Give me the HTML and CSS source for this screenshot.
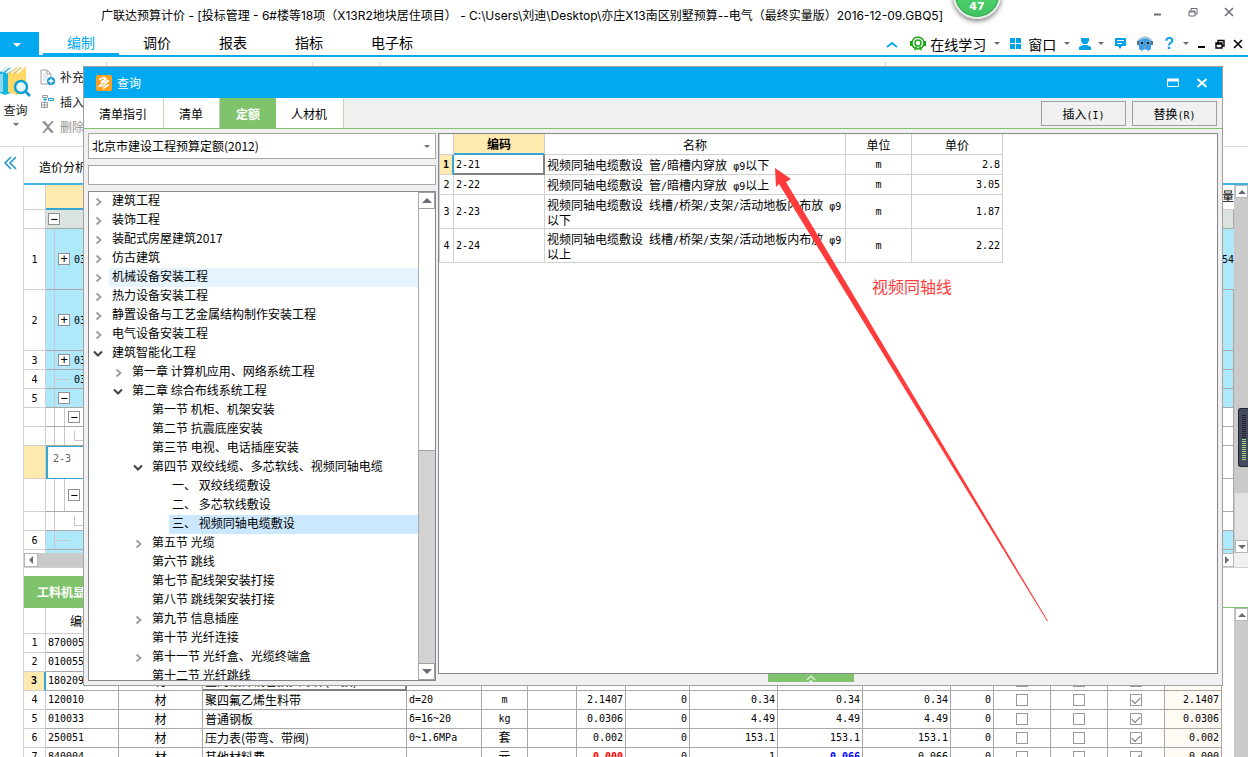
FILE: index.html
```html
<!DOCTYPE html>
<html lang="zh-CN">
<head>
<meta charset="utf-8">
<title>广联达预算计价</title>
<link rel="stylesheet" href="styles.css">
</head>
<body>
<svg class="defs" aria-hidden="true">
  <symbol id="right" viewBox="0 0 8 10"><path d="M1.5 1.5 5.5 5 1.5 8.500" fill="none" stroke="#a0a0a0" stroke-width="2"/></symbol>
  <symbol id="down" viewBox="0 0 10 8"><path d="M1 1.500 5 5.500 9 1.500" fill="none" stroke="#404040" stroke-width="2"/></symbol>
</svg>
<div class="app">
  <header class="titlebar">
    <h1 class="title">广联达预算计价 - [投标管理 - 6#楼等18项（X13R2地块居住项目） - C:\Users\刘迪\Desktop\亦庄X13南区别墅预算--电气（最终实量版）2016-12-09.GBQ5]</h1>
    <div class="badge">47</div>
    <div class="window-controls">
      <button aria-label="最小化"><svg width="10" height="10"><path d="M2 7.500h7" stroke="#6b6b78" stroke-width="2"/></svg></button>
      <button aria-label="还原"><svg width="10" height="10"><path d="M1 4h6v5h-6zM3 4V1.500h6V7H7M1 5h6" fill="none" stroke="#6b6b78"/></svg></button>
      <button aria-label="关闭"><svg width="10" height="10"><path d="M1 1l8 8M9 1L1 9" stroke="#6b6b78" stroke-width="1.500"/></svg></button>
    </div>
  </header>

  <nav class="menubar">
    <button class="app-menu" aria-label="菜单"><span class="caret light"></span></button>
    <div class="menu-tabs">
      <button class="menu-tab active">编制</button>
      <button class="menu-tab">调价</button>
      <button class="menu-tab">报表</button>
      <button class="menu-tab">指标</button>
      <button class="menu-tab">电子标</button>
    </div>
    <div class="menu-tools">
      <button class="w-collapse" aria-label="收起"><svg width="12" height="8"><path d="M1 7l5-4 5 4" fill="none" stroke="#02a9f1" stroke-width="2"/></svg></button>
      <button class="w-learn"><svg width="16" height="16"><circle cx="8" cy="7" r="6" fill="none" stroke="#2a9d1c" stroke-width="1.500"/><path d="M1 5v5M15 5v5" stroke="#11a811" stroke-width="2"/><circle cx="8" cy="7" r="3" fill="none" stroke="#18ae18" stroke-width="1.500"/><path d="M5 10l-1 5 4-3 4 3-1-5-3 2z" fill="#24ad1b"/></svg>在线学习</button>
      <span class="caret w-learn-caret"></span>
      <button class="w-window"><svg width="13" height="13"><path d="M1 1h5v5H1zM7 1h5v5H7zM1 7h5v5H1zM7 7h5v5H7z" fill="#02a1e8"/></svg>窗口</button>
      <span class="caret w-window-caret"></span>
      <button class="w-user" aria-label="用户"><svg width="14" height="13"><path d="M3 1h8v3l-2 3H5L3 4zM5 8h4l4 2v3H1v-3z" fill="#02a1e8"/></svg></button>
      <span class="caret w-user-caret"></span>
      <button class="w-chat" aria-label="消息"><svg width="13" height="13"><path d="M1 1h11v8H8l-2 3-2-3H1z" fill="#02a1e8"/><path d="M3 3.500h7M3 6.500h5" stroke="#fff"/></svg></button>
      <button class="w-bot" aria-label="助手"><svg width="16" height="16"><path d="M2 3Q8-2 14 3L15 6 14 8V13L11 15 9 13 8 14 7 13 5 15 2 13V8L0 6z" fill="#3b9fe8"/><path d="M2 4Q8-1 14 4" fill="none" stroke="#a9c5d8" stroke-width="2"/><path d="M1 5v4M15 5v4" stroke="#63717c" stroke-width="2"/><circle cx="5" cy="7" r="2" fill="#6fb8ee"/><circle cx="11" cy="7" r="2" fill="#6fb8ee"/><circle cx="5" cy="7" r="1.300" fill="#222"/><circle cx="11" cy="7" r="1.300" fill="#222"/><path d="M7 10h2l-1 1.500z" fill="#f4a52a"/></svg></button>
      <button class="w-help" aria-label="帮助">?</button>
      <span class="caret w-help-caret"></span>
      <button class="w-mdi" aria-label="最小化"><svg width="10" height="10"><path d="M1 8h7" stroke="#000" stroke-width="2"/></svg></button>
      <button class="w-mdi" aria-label="还原"><svg width="10" height="10"><path d="M1 4h6v5h-6zM3 4V1.500h6V7H7M1 5h6" fill="none" stroke="#000" stroke-width="1.400"/></svg></button>
      <button class="w-close" aria-label="关闭"><svg width="10" height="10"><path d="M1 1l8 8M9 1L1 9" stroke="#000" stroke-width="1.600"/></svg></button>
    </div>
  </nav>

  <div class="toolbar">
    <button class="tool-query">
      <svg width="31" height="32"><path d="M0 6l7-5 4 1v25l-6 2-5-2z" fill="#18b4e0"/><path d="M0 8h3v18H0z" fill="#8ed9ee"/><path d="M8 7l8-6h10v24l-9 4-9-3z" fill="#ffd866"/><path d="M2 6L9 1M6 7l8-6M11 7l8-6M17 7l7-6" stroke="#fff" stroke-width="2"/><path d="M2 7L9 2M9 8l8-6M14 8l7-6" stroke="#9a9a9a" stroke-width=".6"/><circle cx="21" cy="21" r="6" fill="#e9f8fe" stroke="#159fd0" stroke-width="2.500"/><path d="M25 25l5 5" stroke="#159fd0" stroke-width="3"/></svg>
      <span>查询</span><span class="caret"></span>
    </button>
    <div class="tool-list">
      <button><svg width="16" height="16"><path d="M1 1h6l4 4v10H1zM7 1v4h4" fill="#fff" stroke="#a0a0a0"/><path d="M3 5h3M3 7h5M3 9h4M3 11h3" stroke="#d0d0d0"/><circle cx="11" cy="12" r="4" fill="#1598cf"/><path d="M8.500 12h5M11 9.500v5" stroke="#fff" stroke-width="1.400"/></svg>补充</button>
      <button><svg width="16" height="16"><path d="M2.500 1.500h5v2h-5zM1.500 8.500h6v5h-6zM4.500 8.500v5M1.500 11h6" fill="none" stroke="#9a9a9a"/><path d="M8.500 4.500h5v2h-5z" fill="none" stroke="#18a0d6"/><path d="M3 5.500h4M5 3.500v4" stroke="#18a0d6"/></svg>插入</button>
      <button class="disabled"><svg width="16" height="16"><path d="M2 3l3-1 3 4 4-4h2l-5 6 5 5-3 1-3-4-4 4H2l5-6z" fill="#909090"/></svg>删除</button>
    </div>
    <i class="sep sep-a"></i><i class="sep sep-b"></i><i class="sep sep-c"></i><i class="sep sep-d"></i>
  </div>

  <div class="workspace">
    <aside class="rail"><button aria-label="展开"><svg width="13" height="14"><path d="M7 1L1 7l6 6M12 1L6 7l6 6" fill="none" stroke="#1593cc" stroke-width="1.500"/></svg></button></aside>
    <main class="main">
      <div class="view-tabs"><button>造价分析</button></div>
      <section class="upper">
        <table class="grid bill">
          <colgroup><col class="c22"><col class="c73"><col><col class="c57"></colgroup>
          <thead><tr class="h25"><th></th><th class="hot"></th><th></th><th class="right">量</th></tr></thead>
          <tbody>
            <tr class="h19 gray"><td></td><td><div class="node n0"><button>−</button></div></td><td></td><td></td></tr>
            <tr class="h61 blue"><td>1</td><td class="l1"><div class="node n1"><button>+</button><span>03</span></div></td><td></td><td class="right">54</td></tr>
            <tr class="h61 blue"><td>2</td><td class="l1"><div class="node n1"><button>+</button><span>03</span></div></td><td></td><td></td></tr>
            <tr class="h19 blue"><td>3</td><td class="l1"><div class="node n1"><button>+</button><span>03</span></div></td><td></td><td></td></tr>
            <tr class="h19 blue"><td>4</td><td class="l1"><div class="node leaf"><i></i><span>03</span></div></td><td></td><td></td></tr>
            <tr class="h19 blue"><td>5</td><td class="l1"><div class="node n1"><button>−</button></div></td><td></td><td></td></tr>
            <tr class="h19"><td></td><td class="l2"><div class="node n2"><button>−</button></div></td><td></td><td></td></tr>
            <tr class="h19"><td></td><td class="l2"><div class="elbow"></div></td><td></td><td></td></tr>
            <tr class="h33 current"><td></td><td class="code">2-3</td><td></td><td></td></tr>
            <tr class="h33"><td></td><td class="l2"><div class="node n2"><button>−</button></div></td><td></td><td></td></tr>
            <tr class="h19"><td></td><td class="l1"><div class="elbow"></div></td><td></td><td></td></tr>
            <tr class="h19 blue"><td>6</td><td class="l1"><div class="node leaf"><i></i></div></td><td></td><td></td></tr>
            <tr class="h3 blue"><td></td><td></td><td></td><td></td></tr>
          </tbody>
        </table>
        <div class="vbar"><button class="up" aria-label="向上"></button><div class="thumb"></div><button class="dn" aria-label="向下"></button></div>
      </section>
      <div class="hbar"><button class="lf" aria-label="向左"></button><div class="track"></div><button class="rt" aria-label="向右"></button><span></span></div>
      <div class="detail-tabs"><button>工料机显示</button></div>
      <section class="lower">
        <table class="grid items">
          <colgroup><col class="c22"><col class="c73"><col class="c84"><col><col class="c75"><col class="c46"><col class="c49"><col class="c49"><col class="c64"><col class="c88"><col class="c85"><col class="c88"><col class="c43"><col class="c57"><col class="c57"><col class="c57"><col class="c57"></colgroup>
          <thead><tr class="h26"><th></th><th>编码</th><th>类别</th><th>名称</th><th>规格及型号</th><th>单位</th><th></th><th></th><th></th><th></th><th></th><th></th><th></th><th></th><th></th><th></th><th></th></tr></thead>
          <tbody>
            <tr><td>1</td><td>870005</td><td></td><td></td><td></td><td></td><td></td><td></td><td></td><td></td><td></td><td></td><td></td><td></td><td></td><td></td><td></td></tr>
            <tr><td>2</td><td>010055</td><td></td><td></td><td></td><td></td><td></td><td></td><td></td><td></td><td></td><td></td><td></td><td></td><td></td><td></td><td></td></tr>
            <tr class="picked"><td>3</td><td>180209</td><td>材</td><td class="focus">室内镀锌钢管接头零件(丝接)</td><td></td><td>个</td><td></td><td></td><td></td><td></td><td></td><td></td><td></td><td><input type="checkbox" aria-label="选项一"></td><td><input type="checkbox" aria-label="选项二"></td><td><input type="checkbox" aria-label="选项三" checked></td><td></td></tr>
            <tr><td>4</td><td>120010</td><td>材</td><td>聚四氟乙烯生料带</td><td>d=20</td><td>m</td><td></td><td>2.1407</td><td>0</td><td>0.34</td><td>0.34</td><td>0.34</td><td>0</td><td><input type="checkbox" aria-label="选项一"></td><td><input type="checkbox" aria-label="选项二"></td><td><input type="checkbox" aria-label="选项三" checked></td><td>2.1407</td></tr>
            <tr><td>5</td><td>010033</td><td>材</td><td>普通钢板</td><td>δ=16~20</td><td>kg</td><td></td><td>0.0306</td><td>0</td><td>4.49</td><td>4.49</td><td>4.49</td><td>0</td><td><input type="checkbox" aria-label="选项一"></td><td><input type="checkbox" aria-label="选项二"></td><td><input type="checkbox" aria-label="选项三" checked></td><td>0.0306</td></tr>
            <tr><td>6</td><td>250051</td><td>材</td><td>压力表(带弯、带阀)</td><td>0~1.6MPa</td><td><span class="cjk">套</span></td><td></td><td>0.002</td><td>0</td><td>153.1</td><td>153.1</td><td>153.1</td><td>0</td><td><input type="checkbox" aria-label="选项一"></td><td><input type="checkbox" aria-label="选项二"></td><td><input type="checkbox" aria-label="选项三" checked></td><td>0.002</td></tr>
            <tr><td>7</td><td>840004</td><td>材</td><td>其他材料费</td><td></td><td><span class="cjk">元</span></td><td></td><td><b class="red">0.000</b></td><td>0</td><td>1</td><td><b class="navy">0.066</b></td><td>0.066</td><td>0</td><td><input type="checkbox" aria-label="选项一"></td><td><input type="checkbox" aria-label="选项二"></td><td><input type="checkbox" aria-label="选项三" checked></td><td>0.000</td></tr>
          </tbody>
        </table>
        <div class="vgap"></div>
        <div class="vbar"><button class="up" aria-label="向上"></button><div class="thumb full"></div></div>
      </section>
    </main>
  </div>
</div>

<div class="side-handle"><i></i><b></b></div>

<div class="dialog" role="dialog" aria-label="查询">
  <div class="dialog-title">
    <svg width="16" height="16"><rect width="16" height="16" rx="2" fill="#ff9d1c"/><path d="M3 4.500L8 2.500l2 1.500-5 3M13 5.500L7 7.500 3.500 11l4-.5L12.500 5.500M7 13.500l6-4" fill="none" stroke="#fff" stroke-width="1.700"/></svg>
    <h2>查询</h2>
    <button aria-label="最大化"><svg width="12" height="10"><path d="M.5 1.500h11v7H.5z" fill="none" stroke="#fff"/><path d="M0 2h12" stroke="#fff" stroke-width="3"/></svg></button>
    <button aria-label="关闭"><svg width="12" height="10"><path d="M1.500 1l9 8M10.500 1l-9 8" stroke="#fff" stroke-width="2"/></svg></button>
  </div>
  <div class="dialog-tabs">
    <button class="dtab first">清单指引</button><button class="dtab">清单</button><button class="dtab on">定额</button><button class="dtab last">人材机</button>
    <div class="actions"><button>插入<span class="n">(I)</span></button><button>替换<span class="n">(R)</span></button></div>
  </div>
  <div class="dialog-body">
    <div class="left">
      <div class="combo"><select aria-label="定额库"><option>北京市建设工程预算定额(2012)</option></select><span class="caret"></span></div>
      <input class="search" type="text" aria-label="搜索">
      <div class="tree-box">
        <ul class="tree">
          <li class="d0"><svg class="r"><use href="#right"/></svg><span>建筑工程</span></li>
          <li class="d0"><svg class="r"><use href="#right"/></svg><span>装饰工程</span></li>
          <li class="d0"><svg class="r"><use href="#right"/></svg><span>装配式房屋建筑2017</span></li>
          <li class="d0"><svg class="r"><use href="#right"/></svg><span>仿古建筑</span></li>
          <li class="d0 hover"><svg class="r"><use href="#right"/></svg><span>机械设备安装工程</span></li>
          <li class="d0"><svg class="r"><use href="#right"/></svg><span>热力设备安装工程</span></li>
          <li class="d0"><svg class="r"><use href="#right"/></svg><span>静置设备与工艺金属结构制作安装工程</span></li>
          <li class="d0"><svg class="r"><use href="#right"/></svg><span>电气设备安装工程</span></li>
          <li class="d0"><svg class="d"><use href="#down"/></svg><span>建筑智能化工程</span></li>
          <li class="d1"><svg class="r"><use href="#right"/></svg><span>第一章 计算机应用、网络系统工程</span></li>
          <li class="d1"><svg class="d"><use href="#down"/></svg><span>第二章 综合布线系统工程</span></li>
          <li class="d2"><i></i><span>第一节 机柜、机架安装</span></li>
          <li class="d2"><i></i><span>第二节 抗震底座安装</span></li>
          <li class="d2"><i></i><span>第三节 电视、电话插座安装</span></li>
          <li class="d2"><svg class="d"><use href="#down"/></svg><span>第四节 双绞线缆、多芯软线、视频同轴电缆</span></li>
          <li class="d3"><i></i><span>一、 双绞线缆敷设</span></li>
          <li class="d3"><i></i><span>二、 多芯软线敷设</span></li>
          <li class="d3 selected"><i></i><span>三、 视频同轴电缆敷设</span></li>
          <li class="d2"><svg class="r"><use href="#right"/></svg><span>第五节 光缆</span></li>
          <li class="d2"><i></i><span>第六节 跳线</span></li>
          <li class="d2"><i></i><span>第七节 配线架安装打接</span></li>
          <li class="d2"><i></i><span>第八节 跳线架安装打接</span></li>
          <li class="d2"><svg class="r"><use href="#right"/></svg><span>第九节 信息插座</span></li>
          <li class="d2"><i></i><span>第十节 光纤连接</span></li>
          <li class="d2"><svg class="r"><use href="#right"/></svg><span>第十一节 光纤盒、光缆终端盒</span></li>
          <li class="d2"><i></i><span>第十二节 光纤跳线</span></li>
        </ul>
        <div class="tree-bar"><button class="up" aria-label="向上"></button><div class="thumb"></div><div class="rest"></div><button class="dn" aria-label="向下"></button></div>
      </div>
    </div>
    <div class="right-side">
      <div class="result">
        <table class="quota">
          <colgroup><col class="q14"><col class="q91"><col class="q301"><col class="q66"><col class="q91"></colgroup>
          <thead><tr><th></th><th class="hot">编码</th><th>名称</th><th>单位</th><th>单价</th></tr></thead>
          <tbody>
            <tr class="active"><td>1</td><td>2-21</td><td>视频同轴电缆敷设<span class="n"> </span>管<span class="n">/</span>暗槽内穿放<span class="n"> φ9</span>以下</td><td>m</td><td>2.8</td></tr>
            <tr><td>2</td><td>2-22</td><td>视频同轴电缆敷设<span class="n"> </span>管<span class="n">/</span>暗槽内穿放<span class="n"> φ9</span>以上</td><td>m</td><td>3.05</td></tr>
            <tr class="tall"><td>3</td><td>2-23</td><td>视频同轴电缆敷设<span class="n"> </span>线槽<span class="n">/</span>桥架<span class="n">/</span>支架<span class="n">/</span>活动地板内布放<span class="n"> φ9</span><br>以下</td><td>m</td><td>1.87</td></tr>
            <tr class="tall"><td>4</td><td>2-24</td><td>视频同轴电缆敷设<span class="n"> </span>线槽<span class="n">/</span>桥架<span class="n">/</span>支架<span class="n">/</span>活动地板内布放<span class="n"> φ9</span><br>以上</td><td>m</td><td>2.22</td></tr>
          </tbody>
        </table>
        <svg class="arrow" width="612" height="490"><path d="M336 34L352 45 347 48 609 487 608 487 340 50 337 53z" fill="#ff3b3b"/></svg>
        <div class="note">视频同轴线</div>
      </div>
      <button class="fold" aria-label="展开"><svg width="10" height="8"><path d="M1 6l4-4 4 4" fill="none" stroke="#d5f0cc" stroke-width="1.500"/><path d="M3 8l2-2 2 2z" fill="#fff"/></svg></button>
    </div>
  </div>
</div>
</body>
</html>
```
FILE: styles.css
```css
* { box-sizing: border-box; }
body {
  margin: 0;
  height: 100vh;
  overflow: hidden;
  position: relative;
  background: #fff;
  color: #000;
  font: 12px/16px "Noto Sans CJK SC", sans-serif;
}
button {
  font: inherit;
  color: inherit;
  margin: 0;
  padding: 0;
  border: 0;
  background: none;
  white-space: nowrap;
}
svg { display: block; flex: none; }
.defs { position: absolute; width: 0; height: 0; }
.n { font-family: "DejaVu Sans Mono", monospace; font-size: 10px; line-height: 0; white-space: pre; }
.caret {
  flex: none;
  width: 0;
  height: 0;
  border: 3px solid transparent;
  border-top-color: #6b6b78;
  border-bottom: 0;
}
.caret.light { border-width: 4px 4px 0; border-top-color: #fff; }

.app { height: 100%; display: flex; flex-direction: column; }

/* title bar */
.titlebar { flex: none; height: 32px; display: flex; align-items: center; padding-left: 101px; position: relative; }
.title { margin: 0; flex: 1; font: 12px/16px Inter, "Noto Sans CJK SC", sans-serif; white-space: nowrap; }
.badge {
  position: absolute;
  right: 247px;
  top: -29px;
  width: 48px;
  height: 48px;
  border-radius: 50%;
  border: 2px solid #e4ece6;
  background: linear-gradient(#5fdc7c, #3fc45f);
  box-shadow: 0 2px 5px #777, inset 0 0 0 1px #2da04a;
  color: #fff;
  font: bold 11px/14px "DejaVu Sans", sans-serif;
  text-align: center;
  padding-top: 27px;
}
.window-controls { display: flex; gap: 26px; padding: 0 14px 8px 0; }

/* menu bar */
.menubar { flex: none; height: 25px; display: flex; border-bottom: 2px solid #02a9f1; font-size: 14px; line-height: 20px; }
.app-menu { width: 39px; height: 25px; background: #02a9f1; display: flex; align-items: center; justify-content: center; padding-right: 6px; }
.menu-tabs { display: flex; padding-left: 4px; flex: 1; }
.menu-tab { padding: 0 24px 3px; }
.menu-tab.active { color: #02a9f1; border-bottom: 2px solid #02a9f1; padding-bottom: 1px; }
.menu-tools { display: flex; align-items: center; padding-right: 5px; }
.w-collapse { margin-right: 12px; }
.w-learn, .w-window { display: flex; align-items: center; }
.w-learn { gap: 4px; }
.w-learn-caret { margin: 0 9px 0 8px; }
.w-window { gap: 6px; }
.w-window-caret { margin: 0 8px 0 8px; }
.w-user-caret { margin: 0 10px 0 6px; }
.w-chat { margin-right: 10px; }
.w-bot { margin-right: 11px; }
.w-help { color: #0d9fe2; font: bold 16px/20px "Liberation Sans", sans-serif; }
.w-help-caret { margin: 0 8px 0 9px; }
.w-mdi { margin-right: 8px; }

/* toolbar */
.toolbar { flex: none; height: 90px; display: flex; border-bottom: 1px solid #dcdcdc; position: relative; color: #222; }
.tool-query { width: 31px; padding-top: 9px; display: flex; flex-direction: column; align-items: center; gap: 4px; }
.tool-query .caret { margin-top: 1px; }
.tool-list { padding: 11px 0 0 9px; display: flex; flex-direction: column; gap: 8px; }
.tool-list button { display: flex; gap: 4px; align-items: center; height: 17px; }
.tool-list .disabled { color: #909090; }
.sep { position: absolute; top: 5px; height: 76px; width: 1px; background: #d8d8d8; }
.sep-a { left: 106px; }
.sep-b { left: 312px; }
.sep-c { left: 379px; }
.sep-d { left: 885px; }

/* workspace */
.workspace { flex: 1; min-height: 0; display: flex; }
.rail { flex: none; width: 24px; border-right: 1px solid #d4d4d4; padding: 9px 0 0 4px; }
.main { flex: 1; min-width: 0; display: flex; flex-direction: column; }
.view-tabs { flex: none; height: 38px; padding: 12px 0 0 15px; border-bottom: 2px solid #3fb4e2; }
.upper { flex: none; display: flex; }
.grid { flex: 1; min-width: 0; table-layout: fixed; border-collapse: separate; border-spacing: 0; width: 0; }
.grid td, .grid th {
  padding: 0 2px;
  border: solid #a8a8a8;
  border-width: 0 1px 1px 0;
  font: 10px/16px "DejaVu Sans Mono", "Noto Sans CJK SC", monospace;
  white-space: nowrap;
  overflow: hidden;
}
.grid td:first-child, .grid th { border-color: #cfcfcf; }
.grid td:first-child { text-align: center; }
.c22 { width: 22px; } .c43 { width: 43px; } .c46 { width: 46px; } .c49 { width: 49px; }
.c57 { width: 57px; } .c64 { width: 64px; } .c73 { width: 73px; } .c75 { width: 75px; }
.c84 { width: 84px; } .c85 { width: 85px; } .c88 { width: 88px; }
.bill .c57 { width: 12px; }
.h3 { height: 3px; } .h19 { height: 19px; } .h25 { height: 25px; } .h26 { height: 26px; }
.h33 { height: 33px; } .h61 { height: 61px; }
.bill td { padding: 0; line-height: 1px; }
.bill .h3 td { border-bottom: 0; }
.bill .right { direction: rtl; padding: 0; font-size: 12px; border-right: 0; }
.bill td.right { font-size: 10px; }
.gray td:not(:first-child) { background: #dbe3de; }
.blue td:not(:first-child) { background-color: #aee9fb; }
.grid th.hot { background: #ffeab0; border-bottom: 2px solid #36a5d4; }
.l1 { background: linear-gradient(#c8c8c8, #c8c8c8) 8px 0 / 1px 100% no-repeat; }
.l2 { background: linear-gradient(#c8c8c8, #c8c8c8) 8px 0 / 1px 100% no-repeat, linear-gradient(#c8c8c8, #c8c8c8) 18px 0 / 1px 100% no-repeat; }
.node { display: flex; align-items: center; gap: 4px; }
.node button { width: 12px; height: 12px; border: 1px solid #909090; background: #fff; font: 12px/10px "DejaVu Sans Mono", monospace; }
.n0 { padding-left: 2px; }
.n1 { padding-left: 12px; }
.n2 { padding-left: 22px; }
.leaf i { width: 16px; height: 1px; background: #c8c8c8; }
.leaf { padding-left: 8px; }
.elbow { margin-left: 28px; width: 20px; height: 10px; border: solid #c8c8c8; border-width: 0 0 1px 1px; }
.bill .current td:first-child { background: #ffeab0; }
.bill .current .code { border-left: 2px solid #36a5d4; border-top: 1px solid #36a5d4; border-bottom-color: #36a5d4; padding: 0 0 8px 5px; color: #606060; }

.vbar { flex: none; width: 14px; background: #e2e2e2; display: flex; flex-direction: column; border-left: 1px solid #c8c8c8; }
.vbar button, .tree-bar button, .hbar button { flex: none; display: flex; align-items: center; justify-content: center; background: #fff; border: 1px solid #b8b8b8; }
.vbar button { height: 13px; }
.vbar .thumb { height: 295px; background: #cacaca; }
.vbar .thumb.full { flex: 1; }
.vbar .dn { margin-top: auto; }
.up::before, .dn::before, .lf::before, .rt::before { content: ""; border: 4px solid transparent; }
.up::before { border-bottom-color: #6b6b78; border-top: 0; }
.dn::before { border-top-color: #6b6b78; border-bottom: 0; }
.lf::before { border-right-color: #6b6b78; border-left: 0; }
.rt::before { border-left-color: #6b6b78; border-right: 0; }
.tree-bar .up::before { border-width: 0 5px 5px; }
.tree-bar .dn::before { border-width: 5px 5px 0; }
.hbar { flex: none; height: 15px; display: flex; border-bottom: 1px solid #d0d0d0; background: #f0f0f0; }
.hbar button { width: 14px; }
.hbar .track { flex: 1; background: #cacaca; }
.hbar > span { width: 14px; }

.detail-tabs { flex: none; height: 40px; padding-top: 8px; border-bottom: 1px solid #7fc46c; }
.detail-tabs button { height: 31px; padding: 0 13px; background: #7fc46c; color: #fff; font-weight: bold; }
.lower { flex: 1; min-height: 0; display: flex; align-items: flex-start; overflow: hidden; }
.lower .vbar { align-self: stretch; }
.vgap { flex: none; width: 12px; }
.items tbody tr { height: 19px; }
.items th { font: 12px/16px "Noto Sans CJK SC", sans-serif; }
.items td:nth-child(3), .items td:nth-child(6) { text-align: center; }
.items td:nth-child(3), .items td:nth-child(4), .items .cjk { font: 12px/16px "Noto Sans CJK SC", sans-serif; }
.items td:nth-child(n+8) { text-align: right; }
.items td:nth-child(n+14):nth-child(-n+16) { text-align: center; }
.items td:last-child { background: #fffaf4; }
.items input {
  appearance: none;
  display: block;
  margin: 0 auto;
  width: 12px;
  height: 12px;
  border: 1px solid #989898;
  background: #fff;
}
.items input:checked::before {
  content: "";
  display: block;
  width: 7px;
  height: 4px;
  margin: 2px 0 0 1px;
  border: solid #6b6b78;
  border-width: 0 0 1px 1px;
  transform: rotate(-45deg);
}
.items .picked td:first-child { background: #ffeab0; font-weight: bold; border-right: 2px solid #36a5d4; }
.items .picked .focus { border-bottom: 2px solid #808080; border-right: 2px solid #808080; }
.red { color: #f00; }
.navy { color: #00f; }

.side-handle {
  position: absolute;
  right: 0;
  top: 408px;
  width: 10px;
  height: 59px;
  background: #444b5c;
  border: 1px solid #22252e;
  border-right: 0;
  border-radius: 3px 0 0 3px;
  padding: 6px 2px 6px 3px;
}
.side-handle i, .side-handle b { display: block; height: 24px; background: repeating-linear-gradient(#22252e 0 1px, transparent 1px 2px); }
.side-handle b { height: 22px; background: repeating-linear-gradient(#9fd88a 0 1px, transparent 1px 2px); }

/* query dialog */
.dialog {
  position: absolute;
  left: 83px;
  right: 25px;
  top: 66px;
  bottom: 71px;
  display: flex;
  flex-direction: column;
  background: #f0f0f0;
  border: 1px solid #a0a0a0;
}
.dialog-title { flex: none; height: 31px; display: flex; align-items: center; background: #02a9f1; color: #fff; padding: 0 14px 0 12px; }
.dialog-title h2 { margin: 0 0 0 5px; flex: 1; font-size: 12px; font-weight: normal; }
.dialog-title button + button { margin-left: 17px; }
.dialog-tabs { flex: none; height: 31px; display: flex; border-bottom: 1px solid #7fc46c; }
.dtab { background: #fff; border-right: 1px solid #b9dfae; padding: 2px 16px 0 15px; height: 30px; }
.dtab.on { background: #7fc46c; color: #fff; font-weight: bold; border: 0; padding: 2px 16px 0; }
.actions { margin-left: auto; display: flex; gap: 6px; padding: 3px 5px 2px 0; }
.actions button { width: 85px; border: 1px solid #a0a0a0; background: #f0f0f0; }
.dialog-body { flex: 1; min-height: 0; display: flex; gap: 2px; padding: 4px 4px 3px 4px; }
.left { flex: none; width: 348px; display: flex; flex-direction: column; gap: 6px; padding-bottom: 1px; }
.combo { height: 26px; background: #fff; border: 1px solid #a8a8a8; display: flex; align-items: center; padding-right: 5px; }
.combo select { flex: 1; appearance: none; border: 0; background: none; padding: 0 3px; font: inherit; color: inherit; }
.search { height: 20px; border: 1px solid #a8a8a8; border-radius: 0; background: #fff; padding: 0 3px; }
.tree-box { flex: 1; min-height: 0; display: flex; background: #fff; border: 1px solid #868690; overflow: hidden; }
.tree { flex: 1; margin: 0; padding: 0; list-style: none; overflow: hidden; }
.tree li { display: flex; align-items: center; height: 19px; }
.tree span { flex: 1; height: 19px; padding-left: 3px; line-height: 16px; white-space: nowrap; }
.tree i { flex: none; width: 20px; }
.tree .r { width: 8px; height: 10px; margin: 0 6px; }
.tree .d { width: 10px; height: 8px; margin: 0 6px 0 4px; }
.d1 { padding-left: 20px; }
.d2 { padding-left: 40px; }
.d3 { padding-left: 60px; }
.hover span { background: #e5f3ff; }
.selected span { background: #cce8ff; }
.tree-bar { flex: none; width: 17px; display: flex; flex-direction: column; background: #d2d2d2; border-left: 1px solid #a8a8a8; }
.tree-bar button { height: 17px; border-color: #a0a0a0; border-left: 0; }
.tree-bar .thumb { flex: 242; background: #fff; border-bottom: 1px solid #a0a0a0; }
.tree-bar .rest { flex: 213; }

.right-side { flex: 1; min-width: 0; display: flex; flex-direction: column; align-items: center; }
.result { flex: 1; width: 100%; background: #fff; border: 1px solid #868690; position: relative; overflow: hidden; }
.fold { width: 86px; height: 8px; background: #7fc46c; display: flex; justify-content: center; margin-right: 34px; }
.quota { table-layout: fixed; border-collapse: separate; border-spacing: 0; width: 564px; border-left: 1px solid #d0d0d0; }
.q14 { width: 14px; } .q91 { width: 91px; } .q301 { width: 301px; } .q66 { width: 66px; }
.quota th, .quota td { padding: 0 2px; border: solid #d0d0d0; border-width: 0 1px 1px 0; font-weight: normal; line-height: 15px; white-space: nowrap; }
.quota thead tr { height: 21px; }
.quota tbody tr { height: 20px; }
.quota tbody .tall { height: 34px; }
.quota th.hot { background: #ffeab0; font-weight: bold; border-bottom: 2px solid #36a5d4; }
.quota td { font-size: 12px; }
.quota td:not(:nth-child(3)) { font: 10px/15px "DejaVu Sans Mono", monospace; }
.quota td:first-child, .quota td:nth-child(4) { text-align: center; padding: 0; }
.quota td:last-child { text-align: right; }
.quota .active td:first-child { background: #ffeab0; font-weight: bold; border-right: 2px solid #36a5d4; }
.quota .active td:nth-child(2) { border-right: 2px solid #808080; border-bottom: 2px solid #808080; }
.arrow { position: absolute; left: 0; top: 0; }
.note { position: absolute; left: 433px; top: 141px; color: #ff3b3b; font-size: 16px; line-height: 22px; }
```
